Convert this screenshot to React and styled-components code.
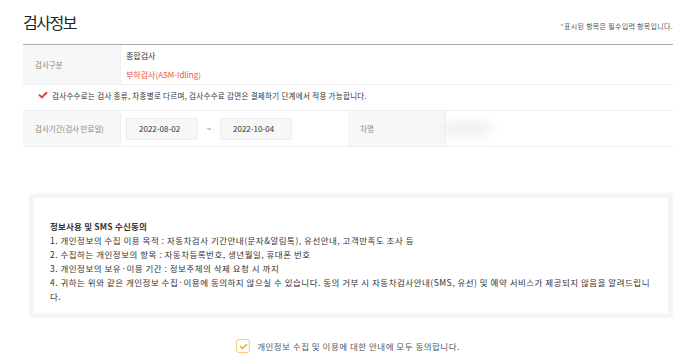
import React from "react";
import styled, { createGlobalStyle } from "styled-components";

const GlobalStyle = createGlobalStyle`
  body {
    margin: 0;
    background: #fff;
    font-family: "Noto Sans CJK KR", "Noto Sans", sans-serif;
    color: #333;
  }
`;

const Page = styled.div`
  width: 697px;
  padding: 0 24px 0 23px;
  box-sizing: border-box;
`;

const Header = styled.div`
  display: flex;
  justify-content: space-between;
  align-items: flex-end;
  height: 44px;
  padding-bottom: 12px;
  box-sizing: border-box;
`;

const Title = styled.h2`
  margin: 0;
  font-size: 16px;
  line-height: 20px;
  font-weight: 400;
  letter-spacing: -1.5px;
  color: #222;
`;

const Required = styled.p`
  margin: 0 0 1px;
  font-size: 7px;
  line-height: 10px;
  letter-spacing: 0.3px;
  color: #555;
  span {
    color: #e8534a;
  }
`;

const Table = styled.div`
  display: grid;
  grid-template-columns: 97px 1fr 97px 1fr;
  border-top: 1px solid #aaa;
`;

const Label = styled.div`
  display: flex;
  align-items: center;
  padding-left: 12px;
  background: #f7f7f7;
  font-size: 7.5px;
  color: #888;
  border-bottom: 1px solid #f0f0f0;
  border-top: ${(p) => (p.$top ? "1px solid #f0f0f0" : "0")};
`;

const Cell = styled.div`
  display: flex;
  flex-direction: ${(p) => (p.$stack ? "column" : "row")};
  justify-content: ${(p) => (p.$stack ? "center" : "flex-start")};
  align-items: ${(p) => (p.$stack ? "flex-start" : "center")};
  grid-column: ${(p) => (p.$span ? "span 3" : "auto")};
  height: ${(p) => p.$h}px;
  padding-left: ${(p) => (p.$stack ? 5 : 5)}px;
  border-bottom: 1px solid #f0f0f0;
  border-top: ${(p) => (p.$top ? "1px solid #f0f0f0" : "0")};
  border-left: 1px solid #f0f0f0;
  box-sizing: border-box;
`;

const Main = styled.div`
  font-size: 8px;
  line-height: 19px;
  color: ${(p) => (p.$red ? "#e8534a" : "#333")};
`;

const Note = styled.div`
  grid-column: span 4;
  display: flex;
  align-items: center;
  gap: 4px;
  margin: 3px 0 8px;
  padding-left: 15px;
  height: 14px;
  font-size: 7.5px;
  letter-spacing: 0.3px;
  color: #333;
`;

const DateBox = styled.div`
  width: 72px;
  height: 22px;
  box-sizing: border-box;
  padding-left: 12px;
  display: flex;
  align-items: center;
  background: #f7f7f7;
  border: 1px solid #eee;
  font-size: 8px;
  color: #333;
`;

const Tilde = styled.span`
  width: 22px;
  text-align: center;
  font-size: 8px;
  color: #666;
`;

const Blurred = styled.span`
  margin-left: -8px;
  font-size: 12px;
  color: #e4e4e4;
  filter: blur(6px);
`;

const Consent = styled.div`
  margin: 46px 0 0 6px;
  border: 5px solid #f5f5f5;
  border-radius: 4px;
  padding: 21px 18px 10px 16px;
  font-size: 8.5px;
  line-height: 14px;
  letter-spacing: 0.5px;
  color: #333;
  p {
    margin: 0;
  }
`;

const ConsentTitle = styled.p`
  font-weight: 700;
  letter-spacing: 0.2px;
`;

const Agree = styled.label`
  display: flex;
  justify-content: center;
  align-items: center;
  gap: 7px;
  margin-top: 21px;
  font-size: 8.5px;
  letter-spacing: 0.5px;
  color: #555;
`;

const CheckBox = styled.span`
  width: 14px;
  height: 14px;
  box-sizing: border-box;
  border: 1px solid #fbc97a;
  border-radius: 3px;
  display: flex;
  align-items: center;
  justify-content: center;
  background: #fff;
`;

const RedCheck = () => (
  <svg width="10" height="8" viewBox="0 0 10 8">
    <path d="M1 3.6 L3.9 6.4 L9 1.2" fill="none" stroke="#e6403a" strokeWidth="2" />
  </svg>
);

const OrangeCheck = () => (
  <svg width="9" height="7" viewBox="0 0 9 7">
    <path d="M1 3 L3.6 5.5 L8 1.2" fill="none" stroke="#f5a623" strokeWidth="1.6" />
  </svg>
);

export default function App() {
  return (
    <Page>
      <GlobalStyle />
      <Header>
        <Title>검사정보</Title>
        <Required>
          <span>*</span>표시된 항목은 필수입력 항목입니다.
        </Required>
      </Header>

      <Table>
        <Label>검사구분</Label>
        <Cell $span $stack $h={40}>
          <Main>종합검사</Main>
          <Main $red>부하검사(ASM-Idling)</Main>
        </Cell>

        <Note>
          <RedCheck />
          검사수수료는 검사 종류, 차종별로 다르며, 검사수수료 감면은 결제하기 단계에서 적용 가능합니다.
        </Note>

        <Label $top>검사기간(검사 만료일)</Label>
        <Cell $top $h={37}>
          <DateBox>2022-08-02</DateBox>
          <Tilde>~</Tilde>
          <DateBox>2022-10-04</DateBox>
        </Cell>
        <Label $top>차명</Label>
        <Cell $top $h={37}>
          <Blurred>●●●●</Blurred>
        </Cell>
      </Table>

      <Consent>
        <ConsentTitle>정보사용 및 SMS 수신동의</ConsentTitle>
        <p>1. 개인정보의 수집 이용 목적 : 자동차검사 기간안내(문자&amp;알림톡), 유선안내, 고객만족도 조사 등</p>
        <p>2. 수집하는 개인정보의 항목 : 자동차등록번호, 생년월일, 휴대폰 번호</p>
        <p>3. 개인정보의 보유·이용 기간 : 정보주체의 삭제 요청 시 까지</p>
        <p>
          4. 귀하는 위와 같은 개인정보 수집·이용에 동의하지 않으실 수 있습니다. 동의 거부 시 자동차검사안내(SMS, 유선) 및 예약 서비스가 제공되지 않음을 알려드립니다.
        </p>
      </Consent>

      <Agree>
        <CheckBox>
          <OrangeCheck />
        </CheckBox>
        개인정보 수집 및 이용에 대한 안내에 모두 동의합니다.
      </Agree>
    </Page>
  );
}
